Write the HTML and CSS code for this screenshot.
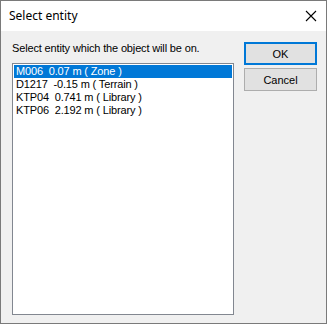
FILE: index.html
```html
<!DOCTYPE html>
<html>
<head>
<meta charset="utf-8">
<link rel="stylesheet" href="styles.css">
</head>
<body>
<div class="window">
  <div class="titlebar">
    <span class="title">Select entity</span>
    <span class="close">
      <svg width="12" height="12" viewBox="0 0 12 12"><path d="M1 1 L11 11 M11 1 L1 11" stroke="#000" stroke-width="1.1" fill="none"/></svg>
    </span>
  </div>
  <div class="client">
    <div class="left">
      <div class="label">Select entity which the object will be on.</div>
      <div class="listbox">
        <div class="item selected">M006  0.07 m ( Zone )</div>
        <div class="item">D1217  -0.15 m ( Terrain )</div>
        <div class="item">KTP04  0.741 m ( Library )</div>
        <div class="item">KTP06  2.192 m ( Library )</div>
      </div>
    </div>
    <div class="buttons">
      <button class="btn default">OK</button>
      <button class="btn">Cancel</button>
    </div>
  </div>
</div>
</body>
</html>
```
FILE: styles.css
```css
html, body {
  margin: 0;
  padding: 0;
  background: #ffffff;
}
.window {
  width: 325px;
  height: 322px;
  border: 1px solid #7a7a7a;
  display: flex;
  flex-direction: column;
  font-family: "Liberation Sans", Arial, sans-serif;
}
.titlebar {
  height: 30px;
  background: #ffffff;
  display: flex;
  align-items: center;
  justify-content: space-between;
  padding-left: 8px;
  padding-right: 9px;
}
.title {
  font-family: "Noto Sans", "Open Sans", sans-serif;
  font-size: 12px;
  color: #000;
  margin-top: -1px;
}
.close {
  display: flex;
  margin-top: -1px;
}
.client {
  flex: 1;
  background: #f0f0f0;
  display: flex;
  padding: 11px 0 0 11px;
  gap: 10px;
}
.left {
  display: flex;
  flex-direction: column;
  width: 222px;
}
.label {
  font-size: 11px;
  line-height: 13px;
  letter-spacing: -0.15px;
  color: #000;
  height: 21px;
}
.listbox {
  height: 248px;
  background: #fff;
  border: 1px solid #828790;
  padding: 1px;
}
.item {
  font-size: 11px;
  line-height: 13px;
  height: 13px;
  white-space: pre;
  letter-spacing: -0.15px;
  padding-left: 2px;
  color: #000;
}
.item.selected {
  background: #0078d7;
  color: #fff;
}
.buttons {
  display: flex;
  flex-direction: column;
  gap: 3px;
}
.btn {
  width: 73px;
  height: 23px;
  margin: 0;
  padding: 0;
  background: #e1e1e1;
  border: 1px solid #adadad;
  font-family: "Liberation Sans", Arial, sans-serif;
  font-size: 11px;
  color: #000;
}
.btn.default {
  border: 2px solid #0078d7;
}
```
